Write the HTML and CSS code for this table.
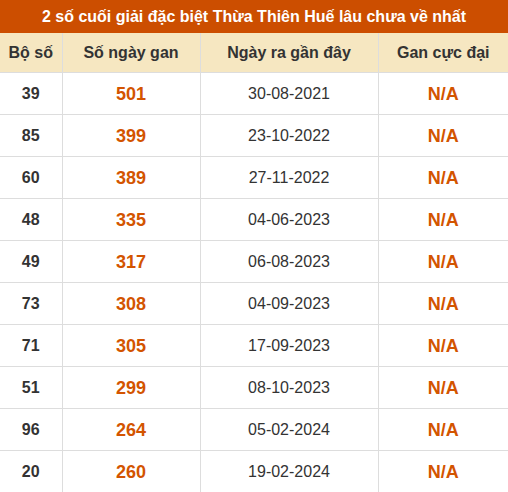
FILE: index.html
```html
<!DOCTYPE html>
<html lang="vi">
<head>
<meta charset="utf-8">
<title>Gan đặc biệt</title>
<link rel="stylesheet" href="styles.css">
</head>
<body>
<div class="title">2 số cuối giải đặc biệt Thừa Thiên Huế lâu chưa về nhất</div>
<table class="gan">
  <colgroup>
    <col class="c1"><col class="c2"><col class="c3"><col class="c4">
  </colgroup>
  <thead>
    <tr><th>Bộ số</th><th>Số ngày gan</th><th>Ngày ra gần đây</th><th>Gan cực đại</th></tr>
  </thead>
  <tbody>
    <tr><td class="bo">39</td><td class="num">501</td><td class="date">30-08-2021</td><td class="num">N/A</td></tr>
    <tr><td class="bo">85</td><td class="num">399</td><td class="date">23-10-2022</td><td class="num">N/A</td></tr>
    <tr><td class="bo">60</td><td class="num">389</td><td class="date">27-11-2022</td><td class="num">N/A</td></tr>
    <tr><td class="bo">48</td><td class="num">335</td><td class="date">04-06-2023</td><td class="num">N/A</td></tr>
    <tr><td class="bo">49</td><td class="num">317</td><td class="date">06-08-2023</td><td class="num">N/A</td></tr>
    <tr><td class="bo">73</td><td class="num">308</td><td class="date">04-09-2023</td><td class="num">N/A</td></tr>
    <tr><td class="bo">71</td><td class="num">305</td><td class="date">17-09-2023</td><td class="num">N/A</td></tr>
    <tr><td class="bo">51</td><td class="num">299</td><td class="date">08-10-2023</td><td class="num">N/A</td></tr>
    <tr><td class="bo">96</td><td class="num">264</td><td class="date">05-02-2024</td><td class="num">N/A</td></tr>
    <tr><td class="bo">20</td><td class="num">260</td><td class="date">19-02-2024</td><td class="num">N/A</td></tr>
  </tbody>
</table>
</body>
</html>
```

FILE: styles.css
```css
html, body {
  margin: 0;
  padding: 0;
  background: #ffffff;
  font-family: "Liberation Sans", Arial, sans-serif;
  color: #333333;
}
.title {
  height: 33px;
  line-height: 33px;
  background: #cc4e00;
  color: #ffffff;
  font-weight: bold;
  font-size: 16px;
  text-align: center;
}
.gan {
  width: 508px;
  border-collapse: collapse;
  table-layout: fixed;
}
.c1 { width: 62px; }
.c2 { width: 138px; }
.c3 { width: 178px; }
.c4 { width: 130px; }
.gan th,
.gan td {
  border-right: 1px solid #dddddd;
  border-bottom: 1px solid #dddddd;
  text-align: center;
  padding: 0;
}
.gan th:last-child,
.gan td:last-child {
  border-right: none;
}
.gan th {
  background: #f6e7c1;
  height: 39px;
  font-size: 16px;
  font-weight: bold;
  color: #333333;
}
.gan td {
  height: 40px;
  padding-top: 1px;
}
.bo {
  font-size: 16px;
  font-weight: bold;
  color: #333333;
}
.num {
  font-size: 18px;
  font-weight: bold;
  color: #d35400;
}
.date {
  font-size: 16px;
  color: #333333;
}
```
